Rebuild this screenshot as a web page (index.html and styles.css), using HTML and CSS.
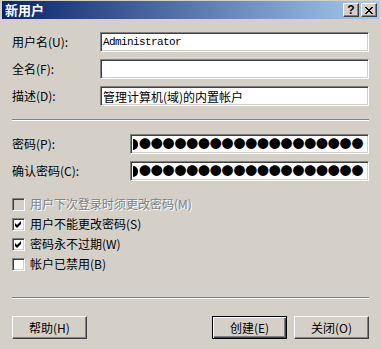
FILE: index.html
```html
<!DOCTYPE html>
<html lang="zh-CN">
<head>
    <meta charset="utf-8">
    <title>新用户</title>
    <link rel="stylesheet" href="styles.css">
</head>
<body>

    <div class="dialog">

        <!-- Title Bar -->
        <div class="titlebar">
            <span class="title">新用户</span>
            <div class="caption-btns">
                <button class="cap-btn help-cap">?</button>
                <button class="cap-btn">
                    <svg width="8" height="7" viewBox="0 0 8 7"><path d="M0 0h2v1h1v1h2v-1h1v-1h2v1h-1v1h-1v1h-1v1h1v1h1v1h1v1h-2v-1h-1v-1h-2v1h-1v1h-2v-1h1v-1h1v-1h1v-1h-1v-1h-1v-1h-1z" fill="#000"/></svg>
                </button>
            </div>
        </div>

        <div class="content">

            <!-- Name fields -->
            <div class="fields">
                <div class="row">
                    <label class="label">用户名(U):</label>
                    <input class="textbox mono" type="text" value="Administrator">
                </div>
                <div class="row">
                    <label class="label">全名(F):</label>
                    <input class="textbox" type="text" value="">
                </div>
                <div class="row">
                    <label class="label">描述(D):</label>
                    <input class="textbox" type="text" value="管理计算机(域)的内置帐户">
                </div>
            </div>

            <div class="separator"></div>

            <!-- Password fields -->
            <div class="fields">
                <div class="row">
                    <label class="label pw-label">密码(P):</label>
                    <div class="textbox pwbox"><span class="dots">●●●●●●●●●●●●●●●●●●●</span></div>
                </div>
                <div class="row">
                    <label class="label pw-label">确认密码(C):</label>
                    <div class="textbox pwbox"><span class="dots">●●●●●●●●●●●●●●●●●●●</span></div>
                </div>
            </div>

            <!-- Options -->
            <div class="options">
                <div class="option disabled">
                    <span class="checkbox"></span>
                    <span>用户下次登录时须更改密码(M)</span>
                </div>
                <div class="option">
                    <span class="checkbox"><svg width="9" height="9" viewBox="0 0 9 9"><path d="M1 3l2 2 4-4v3l-4 4-2-2z" fill="#000"/></svg></span>
                    <span>用户不能更改密码(S)</span>
                </div>
                <div class="option">
                    <span class="checkbox"><svg width="9" height="9" viewBox="0 0 9 9"><path d="M1 3l2 2 4-4v3l-4 4-2-2z" fill="#000"/></svg></span>
                    <span>密码永不过期(W)</span>
                </div>
                <div class="option">
                    <span class="checkbox"></span>
                    <span>帐户已禁用(B)</span>
                </div>
            </div>

            <div class="separator bottom-sep"></div>

            <!-- Buttons -->
            <div class="buttons">
                <button class="btn">帮助(H)</button>
                <div class="right-btns">
                    <button class="btn default">创建(E)</button>
                    <button class="btn">关闭(O)</button>
                </div>
            </div>

        </div>
    </div>

</body>
</html>
```

FILE: styles.css
```css
body {
    margin: 0;
    background-color: #d4d0c8;
    font-family: "Noto Sans CJK SC", "Liberation Sans", sans-serif;
    font-size: 12px;
    color: #000;
}

.dialog {
    width: 381px;
    height: 349px;
    padding-top: 1px;
    box-sizing: border-box;
}

.titlebar {
    height: 18px;
    margin: 0 2px;
    padding: 0 2px 0 3px;
    display: flex;
    align-items: center;
    justify-content: space-between;
    background: linear-gradient(to right, #0a246a, #a6caf0);
}

.title {
    color: #fff;
    font-weight: bold;
    font-size: 13px;
    line-height: 14px;
}

.caption-btns {
    display: flex;
    gap: 2px;
}

.cap-btn {
    width: 16px;
    height: 14px;
    padding: 0;
    display: flex;
    align-items: center;
    justify-content: center;
    background-color: #d4d0c8;
    border: 1px solid;
    border-color: #fff #404040 #404040 #fff;
    box-shadow: inset -1px -1px #808080;
}

.help-cap {
    font-family: "Liberation Sans", sans-serif;
    font-weight: bold;
    font-size: 12px;
    line-height: 12px;
    color: #000;
}

.content {
    padding: 13px 12px 0 12px;
}

.fields {
    display: flex;
    flex-direction: column;
    gap: 7px;
}

.row {
    display: flex;
    align-items: center;
    height: 20px;
}

.label {
    width: 88px;
    line-height: 14px;
    flex-shrink: 0;
}

.pw-label {
    width: 118px;
}

.textbox {
    flex: 1;
    height: 20px;
    box-sizing: border-box;
    margin: 0;
    padding: 0 2px;
    background-color: #fff;
    border: 1px solid;
    border-color: #808080 #fff #fff #808080;
    box-shadow: inset 1px 1px #404040, inset -1px -1px #d4d0c8;
    font-family: "Noto Sans CJK SC", sans-serif;
    font-size: 12px;
    color: #000;
    outline: none;
}

.mono {
    font-family: "Liberation Mono", monospace;
    font-size: 11px;
    letter-spacing: -0.6px;
}

.pwbox {
    display: flex;
    align-items: center;
    gap: 0;
    padding: 0 2px;
    overflow: hidden;
}

/* the first dot is scrolled half out of view */
.pwbox::before {
    content: "";
    width: 5px;
    height: 11px;
    border-radius: 0 6px 6px 0;
    background-color: #000;
    margin-right: 1px;
}

.dots {
    white-space: nowrap;
    font-size: 12px;
    letter-spacing: -0.2px;
    line-height: 14px;
}

.separator {
    height: 0;
    border-top: 1px solid #808080;
    border-bottom: 1px solid #fff;
    margin: 13px 0;
}

.options {
    margin-top: 13px;
}

.option {
    display: flex;
    align-items: center;
    gap: 5px;
    height: 20px;
    line-height: 14px;
}

.checkbox {
    width: 13px;
    height: 13px;
    box-sizing: border-box;
    display: flex;
    align-items: center;
    justify-content: center;
    background-color: #fff;
    border: 1px solid;
    border-color: #808080 #fff #fff #808080;
    box-shadow: inset 1px 1px #404040, inset -1px -1px #d4d0c8;
}

.disabled {
    color: #808080;
    text-shadow: 1px 1px #fff;
}

.disabled .checkbox {
    background-color: #d4d0c8;
}

.bottom-sep {
    margin: 23px 0 17px;
}

.buttons {
    display: flex;
    justify-content: space-between;
}

.right-btns {
    display: flex;
    gap: 7px;
}

.btn {
    width: 75px;
    height: 23px;
    padding: 0;
    background-color: #d4d0c8;
    border: 1px solid;
    border-color: #fff #404040 #404040 #fff;
    box-shadow: inset -1px -1px #808080;
    font-family: "Noto Sans CJK SC", sans-serif;
    font-size: 12px;
    line-height: 14px;
    color: #000;
}

.btn.default {
    border: 1px solid #000;
    box-shadow: inset 1px 1px #fff, inset -1px -1px #404040, inset -2px -2px #808080;
}
```
